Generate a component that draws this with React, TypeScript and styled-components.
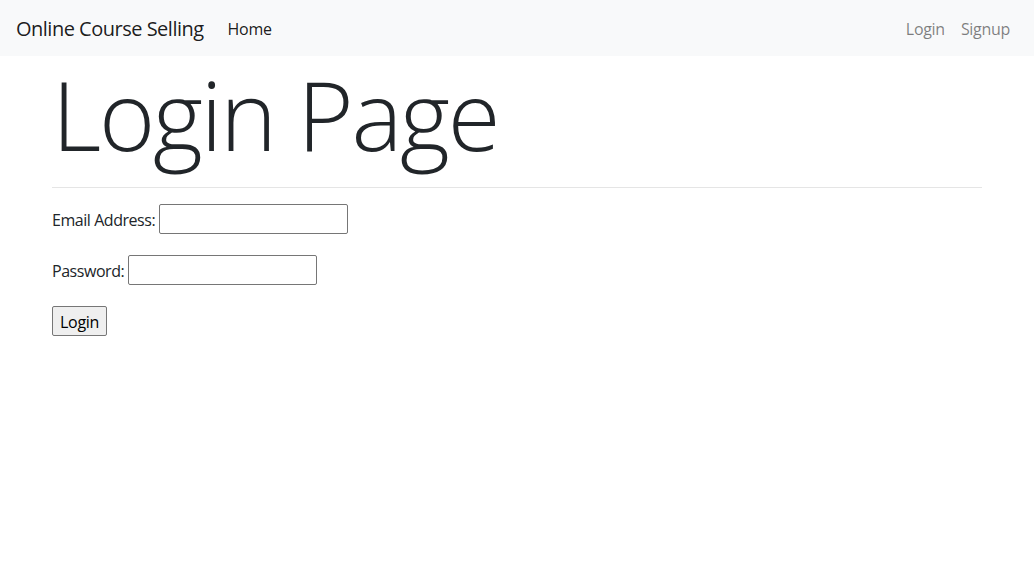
import React from "react";
import styled, { createGlobalStyle } from "styled-components";

const GlobalStyle = createGlobalStyle`
  html, body {
    margin: 0;
    padding: 0;
    background: #fff;
  }
  body {
    font-family: "Open Sans", "Noto Sans", sans-serif;
    font-size: 16px;
    line-height: 1.5;
    color: #212529;
  }
  * {
    box-sizing: border-box;
  }
`;

const Navbar = styled.nav`
  display: flex;
  align-items: center;
  justify-content: space-between;
  height: 56px;
  padding: 8px 16px;
  background-color: #f8f9fa;
`;

const NavGroup = styled.div`
  display: flex;
  align-items: center;
`;

const Brand = styled.a`
  font-size: 20px;
  line-height: 30px;
  padding: 6px 0 4px;
  margin-right: 16px;
  color: rgba(0, 0, 0, 0.9);
  text-decoration: none;
  letter-spacing: -0.5px;
`;

const NavLink = styled.a<{ $active?: boolean }>`
  display: block;
  padding: 9px 8px 7px;
  font-size: 16px;
  line-height: 24px;
  color: ${(p) => (p.$active ? "rgba(0, 0, 0, 0.9)" : "rgba(0, 0, 0, 0.5)")};
  text-decoration: none;
  letter-spacing: -0.3px;
`;

const Container = styled.main`
  max-width: 960px;
  margin: 0 auto;
  padding: 0 15px;
`;

const Title = styled.h1`
  margin: 0 0 8px;
  font-size: 96px;
  font-weight: 300;
  line-height: 1.2;
  letter-spacing: -2.2px;
`;

const Divider = styled.hr`
  margin: 16px 0;
  border: 0;
  border-top: 1px solid rgba(0, 0, 0, 0.1);
`;

const Form = styled.form`
  display: flex;
  flex-direction: column;
  align-items: flex-start;
  gap: 21px;
`;

const Row = styled.div`
  display: flex;
  align-items: center;
  gap: 4px;
  height: 30px;
`;

const Label = styled.label`
  font-size: 16px;
  letter-spacing: -0.45px;
  padding-top: 1px;
`;

const Input = styled.input<{ $width: number }>`
  width: ${(p) => p.$width}px;
  height: 30px;
  padding: 1px 2px;
  border: 1px solid #767676;
  border-radius: 2px;
  font: inherit;
  background: #fff;
`;

const Button = styled.button`
  height: 30px;
  padding: 1px 7px 0;
  border: 1px solid #767676;
  border-radius: 2px;
  background: #efefef;
  font-family: inherit;
  font-size: 16px;
  color: #000;
  letter-spacing: -0.3px;
`;

export default function App() {
  return (
    <>
      <GlobalStyle />
      <Navbar>
        <NavGroup>
          <Brand href="#">Online Course Selling</Brand>
          <NavLink href="#" $active>
            Home
          </NavLink>
        </NavGroup>
        <NavGroup>
          <NavLink href="#">Login</NavLink>
          <NavLink href="#">Signup</NavLink>
        </NavGroup>
      </Navbar>
      <Container>
        <Title>Login Page</Title>
        <Divider />
        <Form onSubmit={(e) => e.preventDefault()}>
          <Row>
            <Label htmlFor="email">Email Address:</Label>
            <Input id="email" type="email" $width={189} />
          </Row>
          <Row>
            <Label htmlFor="password">Password:</Label>
            <Input id="password" type="password" $width={189} />
          </Row>
          <Button type="submit">Login</Button>
        </Form>
      </Container>
    </>
  );
}
